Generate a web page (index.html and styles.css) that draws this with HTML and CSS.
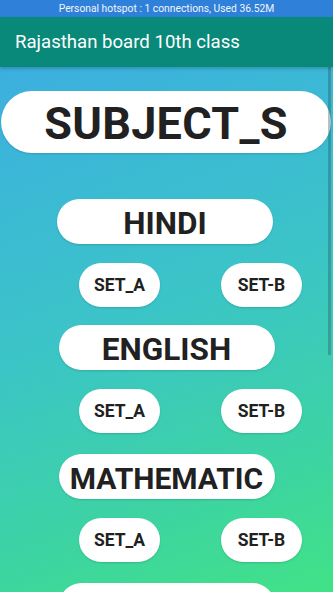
FILE: index.html
```html
<!DOCTYPE html>
<html>
<head>
<meta charset="utf-8">
<link rel="stylesheet" href="styles.css">
</head>
<body>
<div class="screen">
  <div class="status">Personal hotspot : 1 connections, Used 36.52M</div>
  <div class="appbar">Rajasthan board 10th class</div>
  <div class="content">
    <div class="pill title">SUBJECT_S</div>
    <div class="pill subject first">HINDI</div>
    <div class="sets">
      <div class="pill set">SET_A</div>
      <div class="pill set">SET-B</div>
    </div>
    <div class="pill subject">ENGLISH</div>
    <div class="sets">
      <div class="pill set">SET_A</div>
      <div class="pill set">SET-B</div>
    </div>
    <div class="pill subject math">MATHEMATIC</div>
    <div class="sets">
      <div class="pill set">SET_A</div>
      <div class="pill set">SET-B</div>
    </div>
    <div class="pill subject next"></div>
    <div class="scrollbar"></div>
  </div>
</div>
</body>
</html>
```
FILE: styles.css
```css
html, body {
  margin: 0;
  padding: 0;
}
body {
  width: 333px;
  height: 592px;
  overflow: hidden;
  font-family: Roboto, "Noto Sans", sans-serif;
}
.screen {
  display: flex;
  flex-direction: column;
  height: 592px;
}
.status {
  height: 17px;
  background: #2f80d8;
  color: #f2f6fc;
  font-size: 10.3px;
  line-height: 17px;
  text-align: center;
  flex: none;
}
.appbar {
  height: 50px;
  background: #08897a;
  color: #ffffff;
  font-size: 18.6px;
  line-height: 50px;
  padding-left: 15px;
  flex: none;
  position: relative;
  z-index: 2;
  box-shadow: 0 2px 3px rgba(0, 0, 0, 0.18);
}
.content {
  position: relative;
  flex: 1;
  display: flex;
  flex-direction: column;
  align-items: center;
  background: linear-gradient(160deg, #3cafe0 0%, #3bc4c8 45%, #3dd4a2 78%, #41e286 100%);
  overflow: hidden;
}
.pill {
  background: #ffffff;
  color: #212121;
  font-weight: 700;
  display: flex;
  align-items: center;
  justify-content: center;
  box-sizing: border-box;
  box-shadow: 0 1px 2px rgba(0, 0, 0, 0.15);
  flex: none;
}
.title {
  margin-top: 24px;
  width: 330px;
  height: 62px;
  border-radius: 31px;
  font-size: 45px;
  align-self: flex-start;
  margin-left: 1px;
  letter-spacing: 0.3px;
  padding-top: 3px;
}
.subject {
  width: 216px;
  height: 45px;
  border-radius: 23px;
  font-size: 31.5px;
  margin-top: 18px;
  padding-top: 3px;
}
.subject.first {
  margin-top: 46px;
  margin-left: -3px;
}
.subject.math {
  margin-top: 21px;
  font-size: 30px;
}
.subject.next {
  margin-top: 21px;
}
.sets {
  margin-top: 19px;
  width: 223px;
  display: flex;
  justify-content: space-between;
  margin-left: 48px;
}
.set {
  width: 81px;
  height: 44px;
  border-radius: 22px;
  font-size: 17.5px;
}
.scrollbar {
  position: absolute;
  right: 2px;
  top: 0;
  width: 3px;
  height: 288px;
  background: rgba(40, 80, 90, 0.35);
}
```
